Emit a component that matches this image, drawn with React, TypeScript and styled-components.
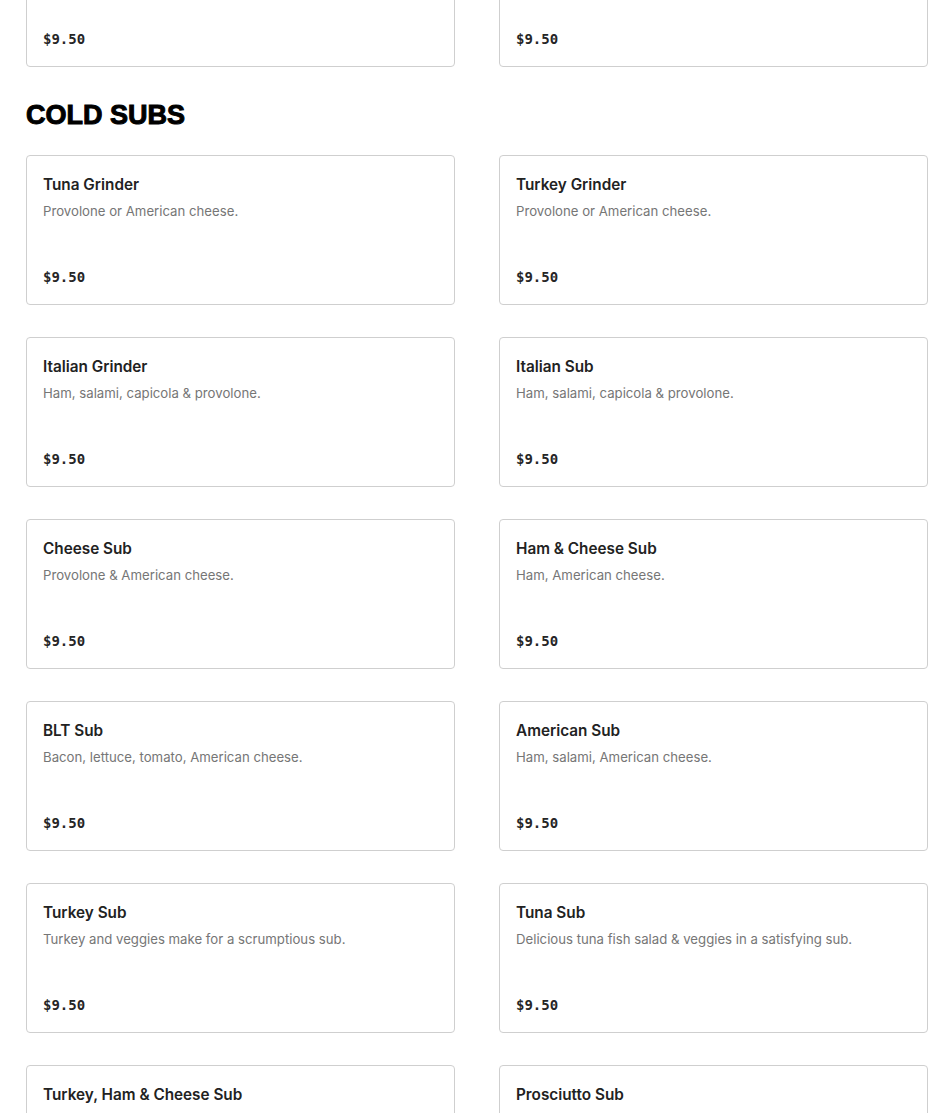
import React from "react";
import styled, { createGlobalStyle } from "styled-components";

const GlobalStyle = createGlobalStyle`
  html, body {
    margin: 0;
    padding: 0;
    background: #ffffff;
  }
  body {
    font-family: "Inter", "Liberation Sans", sans-serif;
    color: #1f1f1f;
    overflow: hidden;
  }
`;

const Page = styled.main`
  width: 902px;
  padding: 0 22px 40px 26px;
  margin-top: -83px;
`;

const Section = styled.section`
  & + & {
    margin-top: 32px;
  }
`;

const Heading = styled.h2`
  margin: 0 0 24px;
  font-family: "Liberation Sans", "Arial", sans-serif;
  font-size: 27px;
  line-height: 32px;
  font-weight: 700;
  -webkit-text-stroke: 1px #000;
  color: #000;
  text-transform: uppercase;
`;

const Grid = styled.div`
  display: grid;
  grid-template-columns: 1fr 1fr;
  column-gap: 44px;
  row-gap: 32px;
`;

const Card = styled.article`
  box-sizing: border-box;
  min-height: 150px;
  border: 1px solid #cfcfcf;
  border-radius: 4px;
  padding: 17px 16px 17px;
  display: flex;
  flex-direction: column;
  background: #fff;
`;

const Name = styled.h3`
  margin: 0 0 3px;
  font-size: 15.3px;
  line-height: 24px;
  font-weight: 600;
  color: #222;
`;

const Desc = styled.p`
  margin: 0;
  font-size: 13.2px;
  line-height: 22px;
  color: #767676;
`;

const Price = styled.span`
  margin-top: auto;
  font-family: "DejaVu Sans Mono", "Liberation Mono", monospace;
  font-size: 14px;
  line-height: 20px;
  font-weight: 700;
  color: #262626;
`;

type Item = { name: string; desc: string; price: string };

const hotSubs: Item[] = [
  { name: "Meatball Sub", desc: "Meatballs, marinara & provolone.", price: "$9.50" },
  { name: "Sausage Sub", desc: "Sausage, peppers & onions.", price: "$9.50" },
];

const coldSubs: Item[] = [
  { name: "Tuna Grinder", desc: "Provolone or American cheese.", price: "$9.50" },
  { name: "Turkey Grinder", desc: "Provolone or American cheese.", price: "$9.50" },
  { name: "Italian Grinder", desc: "Ham, salami, capicola & provolone.", price: "$9.50" },
  { name: "Italian Sub", desc: "Ham, salami, capicola & provolone.", price: "$9.50" },
  { name: "Cheese Sub", desc: "Provolone & American cheese.", price: "$9.50" },
  { name: "Ham & Cheese Sub", desc: "Ham, American cheese.", price: "$9.50" },
  { name: "BLT Sub", desc: "Bacon, lettuce, tomato, American cheese.", price: "$9.50" },
  { name: "American Sub", desc: "Ham, salami, American cheese.", price: "$9.50" },
  { name: "Turkey Sub", desc: "Turkey and veggies make for a scrumptious sub.", price: "$9.50" },
  { name: "Tuna Sub", desc: "Delicious tuna fish salad & veggies in a satisfying sub.", price: "$9.50" },
  { name: "Turkey, Ham & Cheese Sub", desc: "Turkey, ham & American cheese.", price: "$9.50" },
  {
    name: "Prosciutto Sub",
    desc: "Prosciutto, fresh mozzarella, roasted red peppers & balsamic glaze on a sub roll.",
    price: "$9.50",
  },
];

function MenuCard({ item }: { item: Item }) {
  return (
    <Card>
      <Name>{item.name}</Name>
      <Desc>{item.desc}</Desc>
      <Price>{item.price}</Price>
    </Card>
  );
}

export default function App() {
  return (
    <>
      <GlobalStyle />
      <Page>
        <Section>
          <Grid>
            {hotSubs.map((item) => (
              <MenuCard key={item.name} item={item} />
            ))}
          </Grid>
        </Section>
        <Section>
          <Heading>Cold Subs</Heading>
          <Grid>
            {coldSubs.map((item) => (
              <MenuCard key={item.name} item={item} />
            ))}
          </Grid>
        </Section>
      </Page>
    </>
  );
}
